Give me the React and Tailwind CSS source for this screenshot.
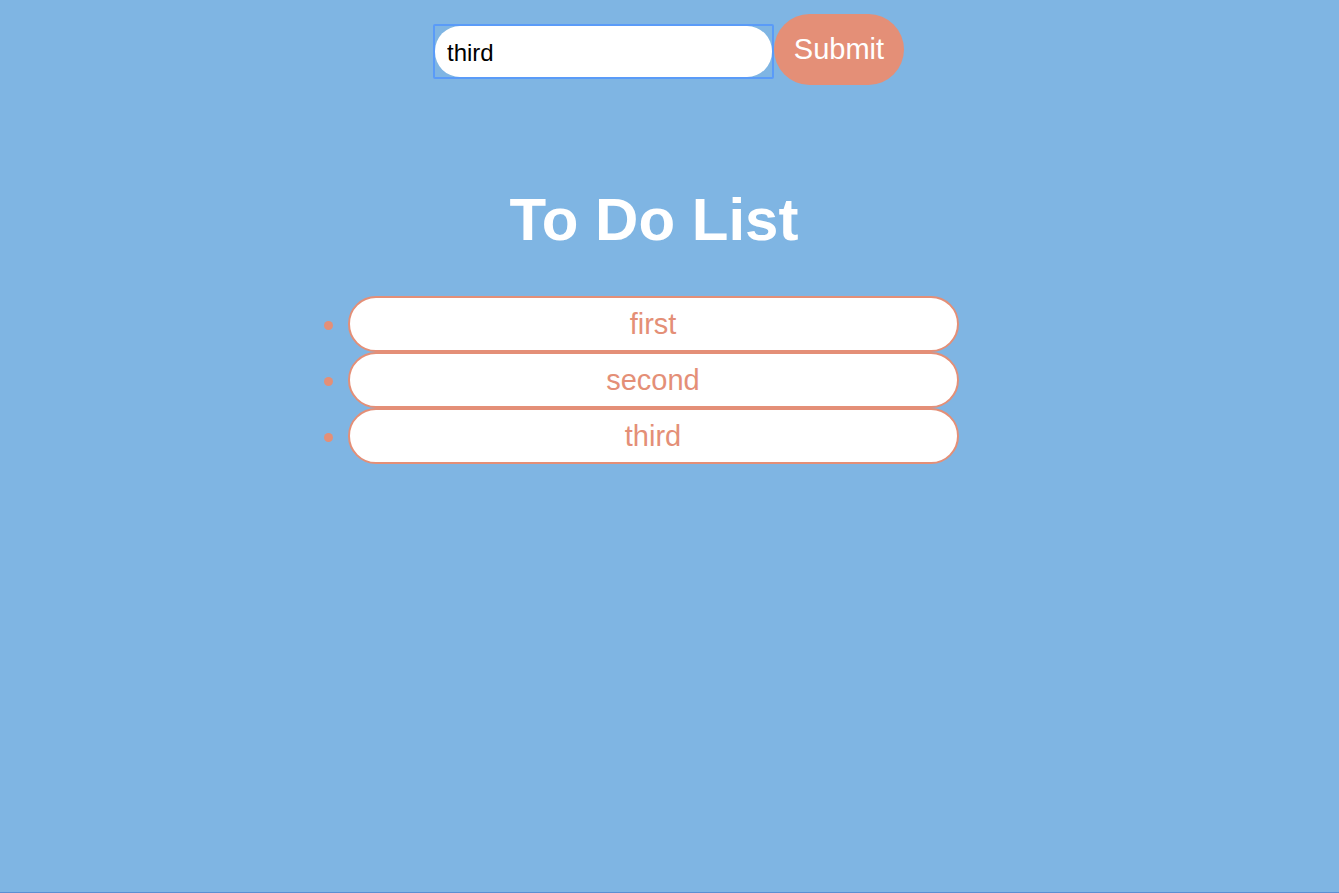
import React from "react";

export default function App() {
  return (
    <div
      className="h-[893px] w-full bg-[#7fb5e3] border-b border-[#5b8fd3] overflow-hidden"
      style={{ fontFamily: '"Liberation Sans", Arial, sans-serif' }}
    >
      <div className="flex justify-center items-start pt-[14px] pr-[2px]">
        <div className="mt-[10px] w-[341px] h-[55px] border-2 border-[#5a9bf8] rounded-[2px] flex">
          <input
            defaultValue="third"
            className="w-full h-full bg-white rounded-[25px] pl-[12px] pt-[2px] text-[24px] text-black outline-none"
          />
        </div>
        <button className="w-[130px] h-[71px] rounded-full bg-[#e48f77] text-white text-[29px]">
          Submit
        </button>
      </div>
      <div className="w-[724px] mx-auto pr-[32px]">
        <h1 className="mt-[105px] text-center text-white font-bold text-[60px] leading-none pl-[1px]">
          To Do List
        </h1>
        <ul className="mt-[46px] pl-10 list-disc text-[#e48f77]">
          {["first", "second", "third"].map((t) => (
            <li
              key={t}
              className="w-[611px] h-[56px] bg-white border-2 border-[#e48f77] rounded-full text-center text-[29px] leading-[52px] marker:text-[#e48f77]"
            >
              {t}
            </li>
          ))}
        </ul>
      </div>
    </div>
  );
}
